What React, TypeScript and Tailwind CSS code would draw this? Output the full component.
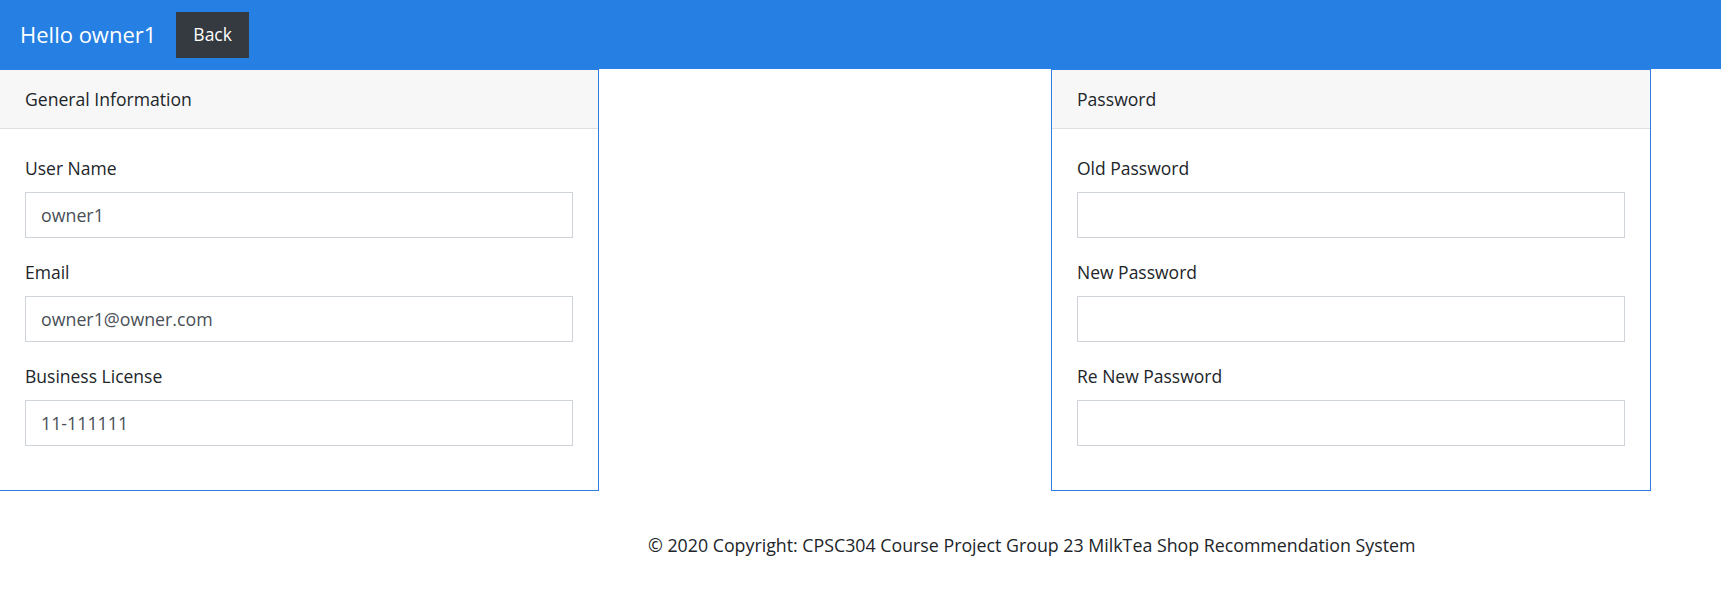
const generalFields = [
  { label: "User Name", value: "owner1" },
  { label: "Email", value: "owner1@owner.com" },
  { label: "Business License", value: "11-111111" },
];

const passwordFields = [
  { label: "Old Password", value: "" },
  { label: "New Password", value: "" },
  { label: "Re New Password", value: "" },
];

type Field = { label: string; value: string };

const Card = ({
  title,
  fields,
  className = "",
  password = false,
}: {
  title: string;
  fields: Field[];
  className?: string;
  password?: boolean;
}) => {
  return (
    <div className={"w-[600px] border border-[#2a7fe0] bg-white " + className}>
      <div className="h-[59px] flex items-center px-[25px] bg-[#f7f7f7] border-b border-[#dfdfdf] text-[17.6px]">
        {title}
      </div>
      <div className="px-[25px] pt-[23px] pb-[26px]">
        {fields.map((f, i) => (
          <div key={i} className="mb-[18px]">
            <label className="block leading-[32px] mb-[8px] text-[17.5px]">
              {f.label}
            </label>
            <input
              type={password ? "password" : "text"}
              defaultValue={f.value}
              className="block w-full h-[46px] px-[15px] border border-[#ced4da] text-[17.8px] text-[#495057] outline-none"
            />
          </div>
        ))}
      </div>
    </div>
  );
};

export default function App() {
  return (
    <div className="min-h-screen bg-white font-['Open_Sans',sans-serif] text-[#212529]">
      <nav className="h-[69px] bg-[#2680e3] flex items-center pl-[20px]">
        <span className="text-white text-[22px]">Hello owner1</span>
        <button className="ml-[20px] h-[46px] px-[17px] bg-[#343a40] text-white text-[17.5px]">
          Back
        </button>
      </nav>

      <div className="flex -ml-px">
        <Card title="General Information" fields={generalFields} />
        <Card
          title="Password"
          fields={passwordFields}
          className="ml-[452px]"
          password
        />
      </div>

      <footer className="pt-[39px] pl-[648px] leading-[30px] text-[17.8px]">
        © 2020 Copyright: CPSC304 Course Project Group 23 MilkTea Shop
        Recommendation System
      </footer>
    </div>
  );
}
